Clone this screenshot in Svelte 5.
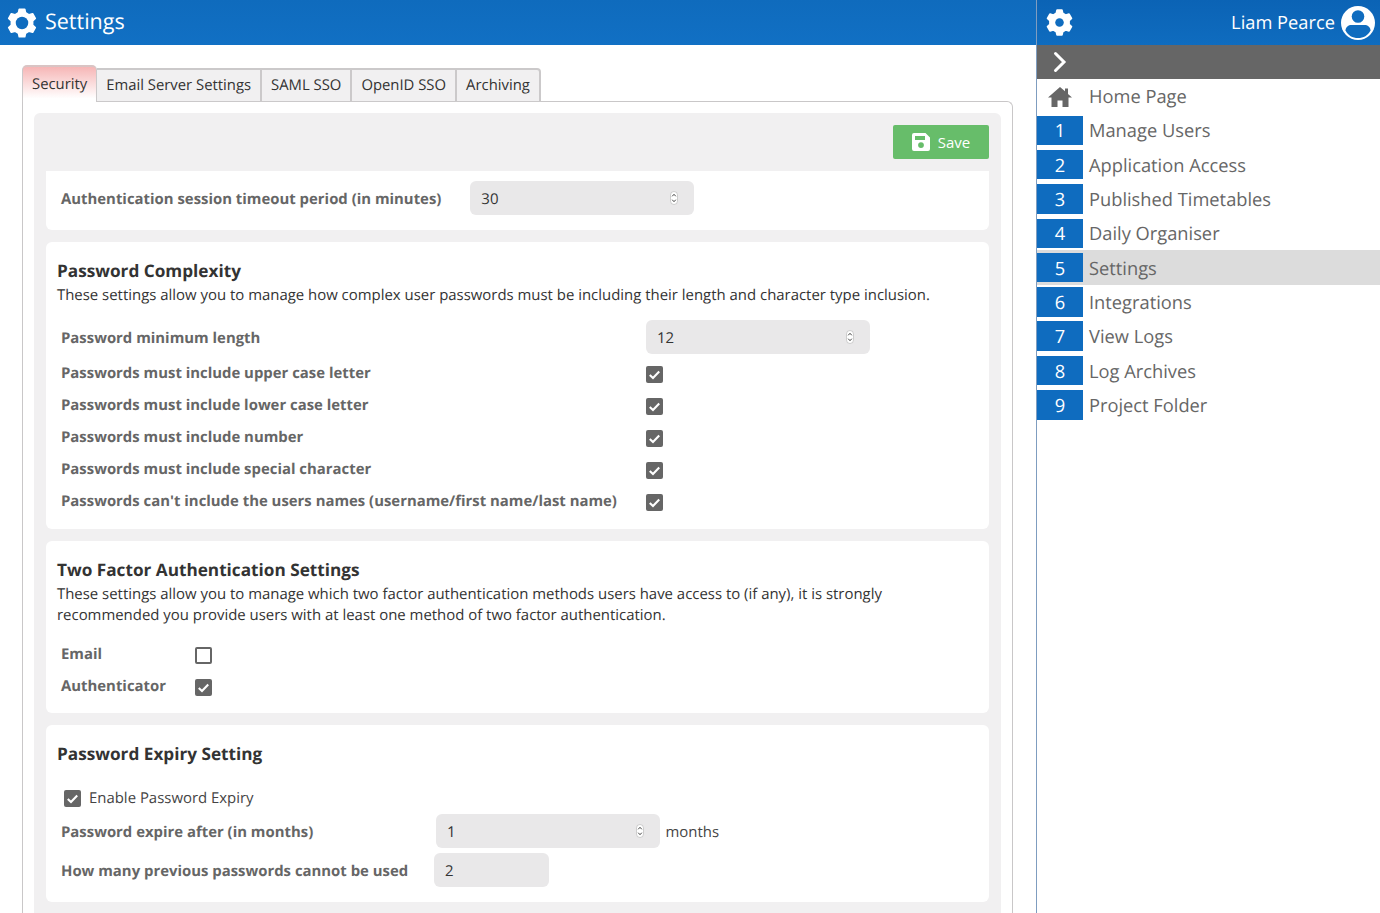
<script>
  const tabs = ['Email Server Settings', 'SAML SSO', 'OpenID SSO', 'Archiving'];
  const nav = ['Manage Users', 'Application Access', 'Published Timetables', 'Daily Organiser', 'Settings', 'Integrations', 'View Logs', 'Log Archives', 'Project Folder'];
  const rules = [
    'Passwords must include upper case letter',
    'Passwords must include lower case letter',
    'Passwords must include number',
    'Passwords must include special character',
    "Passwords can't include the users names (username/first name/last name)"
  ];
  function gearPath(outer, root) {
    const pt = (r, deg) => {
      const a = (deg * Math.PI) / 180;
      return (12 + r * Math.cos(a)).toFixed(2) + ' ' + (12 + r * Math.sin(a)).toFixed(2);
    };
    const parts = [];
    for (let k = 0; k < 6; k++) {
      const c = -90 + 60 * k;
      parts.push(pt(root, c - 19), pt(outer, c - 11), pt(outer, c + 11), pt(root, c + 19));
    }
    return 'M' + parts.join('L') + 'z';
  }
  const gear = gearPath(11.2, 8.6);
</script>

{#snippet check(on)}
  <span class="box" class:on>
    {#if on}
      <svg viewBox="0 0 18 18" width="17" height="17"><path d="M4 9.500l3.400 3.200L14 5.800" fill="none" stroke="#fff" stroke-width="2.200"/></svg>
    {/if}
  </span>
{/snippet}

{#snippet spin(value)}
  <div class="input spin">
    <span class="val">{value}</span>
    <span class="stepper">
      <svg viewBox="0 0 8 14" width="8" height="14"><rect x=".5" y=".5" width="7" height="13" rx="3.500" fill="#fff" stroke="#bbb" stroke-width=".7"/><path d="M2.200 5.300L4 3.300l1.800 2M2.200 8.700L4 10.700l1.800-2" fill="none" stroke="#444" stroke-width="1"/></svg>
    </span>
  </div>
{/snippet}

<div class="page">
  <main>
    <header class="top">
      <svg class="gear" viewBox="0 0 24 24" width="30" height="30">
        <path d={gear} fill="#fff" stroke="#fff" stroke-width="1.400" stroke-linejoin="round"/><circle cx="12" cy="12" r="5" fill="#0f6cbf"/>
      </svg>
      <h1>Settings</h1>
    </header>

    <div class="content">
      <nav class="tabs">
        <div class="tab active">Security</div>
        {#each tabs as t}<div class="tab">{t}</div>{/each}
      </nav>

      <section class="frame">
        <div class="inner">
          <div class="toolbar">
            <button class="save">
              <svg viewBox="0 0 18 18" width="18" height="18"><path fill-rule="evenodd" d="M2 0h11.500L18 4.500V16a2 2 0 0 1-2 2H2a2 2 0 0 1-2-2V2a2 2 0 0 1 2-2zM3 3v4h10V3zM9 9.200a2.900 2.900 0 1 0 0 5.800 2.900 2.900 0 0 0 0-5.800z" fill="#fff"/></svg>
              Save
            </button>
          </div>

          <div class="card first">
            <div class="row timeout">
              <label class="lbl">Authentication session timeout period (in minutes)</label>
              {@render spin('30')}
            </div>
          </div>

          <div class="card complexity">
            <h2>Password Complexity</h2>
            <p>These settings allow you to manage how complex user passwords must be including their length and character type inclusion.</p>
            <div class="grid">
              <label class="lbl">Password minimum length</label>
              {@render spin('12')}
              {#each rules as r}
                <label class="lbl">{r}</label>
                {@render check(true)}
              {/each}
            </div>
          </div>

          <div class="card tfa">
            <h2>Two Factor Authentication Settings</h2>
            <p>These settings allow you to manage which two factor authentication methods users have access to (if any), it is strongly recommended you provide users with at least one method of two factor authentication.</p>
            <div class="grid small">
              <label class="lbl">Email</label>
              {@render check(false)}
              <label class="lbl">Authenticator</label>
              {@render check(true)}
            </div>
          </div>

          <div class="card expiry">
            <h2>Password Expiry Setting</h2>
            <div class="enable">
              {@render check(true)}
              <span>Enable Password Expiry</span>
            </div>
            <div class="row after">
              <label class="lbl">Password expire after (in months)</label>
              {@render spin('1')}
              <span class="unit">months</span>
            </div>
            <div class="row prev">
              <label class="lbl">How many previous passwords cannot be used</label>
              <div class="input short">2</div>
            </div>
          </div>
        </div>
      </section>
    </div>
  </main>

  <aside>
    <div class="side-top">
      <svg viewBox="0 0 24 24" width="27" height="27">
        <path d={gear} fill="#fff" stroke="#fff" stroke-width="1.600" stroke-linejoin="round"/><circle cx="12" cy="12" r="3.800" fill="#0f6cbf"/>
      </svg>
      <span class="user">Liam Pearce</span>
      <svg class="avatar" viewBox="0 0 34 34" width="34" height="34">
        <circle cx="17" cy="17" r="17" fill="#fff"/>
        <circle cx="17" cy="10.500" r="6.300" fill="#0f6cbf"/>
        <path d="M4.500 24.500c0-3.500 3-5.500 6-5.500h13c3 0 6 2 6 5.500C27 29.500 22.500 32 17 32S7 29.500 4.500 24.500z" fill="#0f6cbf"/>
      </svg>
    </div>
    <div class="collapse">
      <svg viewBox="0 0 14 22" width="14" height="22"><path d="M2.500 2.500L11 11l-8.500 8.500" fill="none" stroke="#fff" stroke-width="3" stroke-linecap="round"/></svg>
    </div>
    <ul>
      <li>
        <span class="num home">
          <svg viewBox="0 0 24 20" width="24" height="20"><path d="M12 0L0 10.500h3.500V20h6v-6.500h5V20h6v-9.500H24L20 7V1.500h-3V4.300z" fill="#666"/></svg>
        </span>
        <span class="t">Home Page</span>
      </li>
      {#each nav as n, i}
        <li class:current={n === 'Settings'}><span class="num">{i + 1}</span><span class="t">{n}</span></li>
      {/each}
    </ul>
  </aside>
</div>

<style>
  :global(body) {
    margin: 0;
    overflow: hidden;
    background: #fff;
    font-family: "Open Sans", "Liberation Sans", sans-serif;
    text-rendering: geometricPrecision;
  }
  .page { display: flex; height: 913px; overflow: hidden; }
  main { width: 1036px; flex: none; overflow: hidden; }
  .top {
    height: 45px;
    display: flex;
    align-items: center;
    gap: 8px;
    padding-left: 7px;
    background: linear-gradient(#0f6bbd, #1170c4);
    color: #fff;
  }
  h1 { margin: 0 0 1px; font-size: 21.5px; font-weight: 400; line-height: 1; }
  .content { padding: 20px 23px 0 22px; }
  .tabs { display: flex; align-items: flex-end; height: 37px; position: relative; z-index: 1; margin-bottom: -1px; }
  .tab {
    height: 34px;
    box-sizing: border-box;
    padding: 0 9px;
    line-height: 31px;
    font-size: 14.85px;
    color: #333;
    background: #f1f0f1;
    border: 2px solid #cbc9ca;
    border-bottom-width: 1px;
    border-left: 0;
    white-space: nowrap;
  }
  .tab:last-child { border-radius: 0 4px 0 0; }
  .active {
    height: 37px;
    line-height: 35px;
    padding: 0 9px;
    border: 1px solid #cbc9ca;
    border-top: 2px solid #d9c4c4;
    border-bottom: 0;
    border-radius: 5px 5px 0 0;
    background: linear-gradient(#f6b6b6, #fff 90%);
  }
  .frame {
    border: 1px solid #c9c7c8;
    border-bottom: 0;
    border-radius: 0 6px 0 0;
    padding: 11px 11px 0;
    height: 820px;
  }
  .inner { background: #f1f0f1; border-radius: 6px 6px 0 0; padding: 0 12px 12px; }
  .toolbar { height: 58px; display: flex; justify-content: flex-end; align-items: center; }
  .save {
    width: 96px;
    height: 34px;
    display: flex;
    align-items: center;
    justify-content: center;
    gap: 8px;
    padding: 0;
    border: 0;
    border-radius: 2px;
    background: #67bd6a;
    color: #fff;
    font: 400 15px "Open Sans", sans-serif;
  }
  .card { background: #fff; border-radius: 6px; padding: 0 11px; margin-bottom: 12px; color: #333; }
  .first { height: 59px; border-radius: 0 0 6px 6px; box-sizing: border-box; padding-top: 10px; }
  .complexity { height: 287px; box-sizing: border-box; padding-top: 18px; }
  .tfa { height: 172px; box-sizing: border-box; padding-top: 18px; }
  .expiry { height: 177px; box-sizing: border-box; padding-top: 18px; margin-bottom: 0; }
  h2 { margin: 0 0 1px; font-size: 17.2px; font-weight: 700; line-height: 24px; color: #333; }
  p { margin: 0; font-size: 14.93px; line-height: 21px; color: #333; }
  .lbl { font-size: 14.9px; font-weight: 700; color: #666; line-height: 20px; padding: 2px 0 0 4px; white-space: nowrap; }
  .row { display: flex; align-items: center; }
  .timeout { gap: 29px; }
  .grid {
    display: grid;
    grid-template-columns: 589px 223.500px;
    grid-auto-rows: 32px;
    align-items: center;
    margin-top: 11px;
  }
  .complexity .grid { grid-template-rows: 39px; }
  .small { grid-template-columns: 138px 30px; margin-top: 11px; }
  .input {
    height: 34px;
    box-sizing: border-box;
    border-radius: 6px;
    background: #e9e8e9;
    color: #333;
    font-size: 15px;
    line-height: 36px;
    padding: 0 11px;
  }
  .spin { width: 223.500px; display: flex; justify-content: space-between; align-items: center; padding-right: 16px; flex: none; }
  .val { line-height: 20px; padding-top: 2px; }
  .stepper { display: flex; }
  .box {
    width: 17px;
    height: 17px;
    box-sizing: border-box;
    border-radius: 2px;
    border: 2px solid #666;
    background: #fff;
    display: inline-block;
    position: relative;
    top: 2px;
  }
  .box.on { border: 0; background: #666; }
  .box svg { display: block; }
  .enable { display: flex; align-items: center; gap: 8px; margin: 19px 0 0 7px; font-size: 14.93px; color: #444; height: 24px; }
  .enable .box { top: 0; }
  .after { margin-top: 4px; }
  .after .lbl { width: 375px; }
  .unit { margin-left: 6px; padding-top: 2px; font-size: 14.93px; color: #444; }
  .prev { margin-top: 5px; }
  .prev .lbl { width: 373px; }
  .short { width: 115px; }

  aside {
    flex: 1;
    border-left: 1px solid #7f9dc0;
    box-sizing: border-box;
    color: #666;
  }
  .side-top {
    height: 45px;
    display: flex;
    align-items: center;
    padding: 0 5px 0 9px;
    background: linear-gradient(#0b63b5, #0f6cbf);
    color: #fff;
    box-sizing: border-box;
  }
  .user { margin: 0 6px 0 auto; font-size: 18.3px; }
  .collapse { height: 34px; background: #666; display: flex; align-items: center; padding-left: 16px; }
  ul { list-style: none; margin: 0; padding: 0; }
  li {
    height: 34.3px;
    display: flex;
    align-items: center;
    font-size: 18.3px;
    color: #666;
  }
  li.current { background: #dcdcdc; }
  .t { padding-top: 1px; }
  .num {
    width: 46px;
    height: 29.500px;
    margin-right: 6px;
    padding-top: 1px;
    box-sizing: border-box;
    background: #0f6cbf;
    color: #fff;
    display: flex;
    align-items: center;
    justify-content: center;
    flex: none;
  }
  .num.home { background: none; }
</style>
